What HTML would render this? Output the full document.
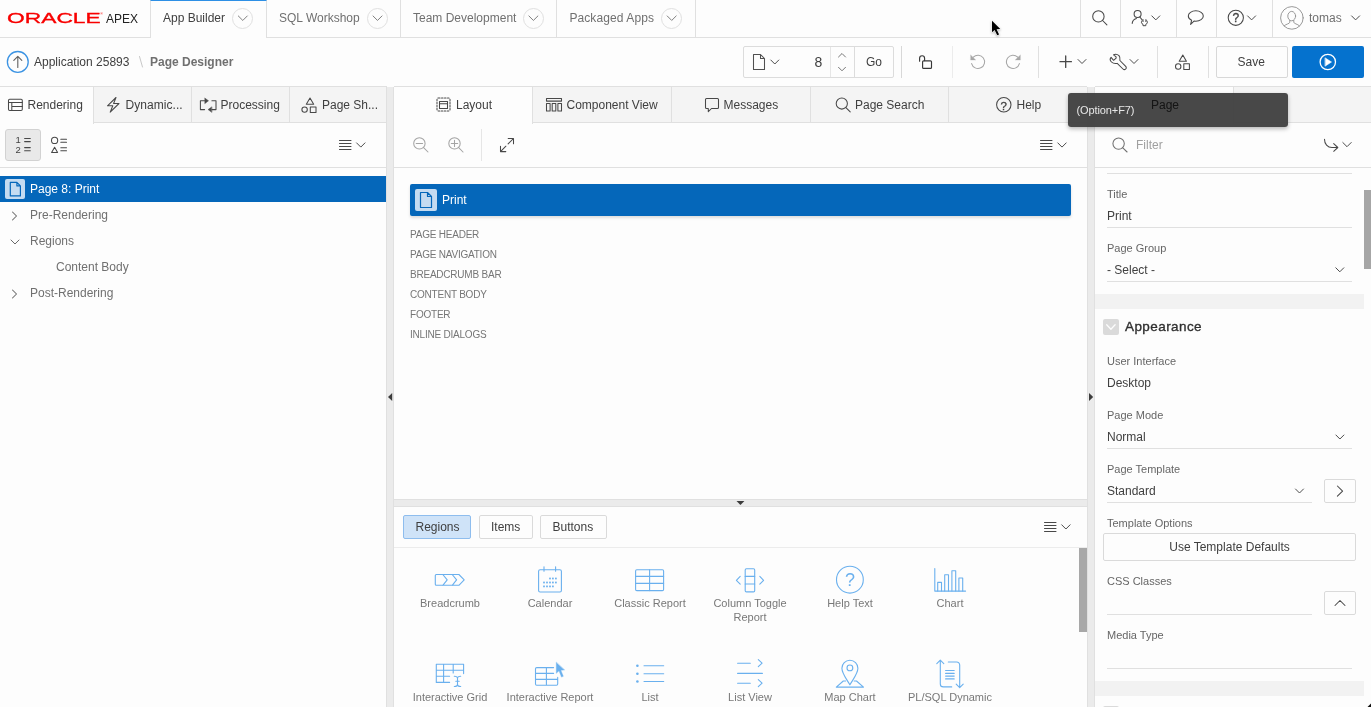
<!DOCTYPE html>
<html><head><meta charset="utf-8"><title>Page Designer</title>
<style>
*{box-sizing:border-box;margin:0;padding:0}
html,body{width:1371px;height:707px;overflow:hidden;background:#fdfdfd}
body{font-family:"Liberation Sans",sans-serif;font-size:12px;color:#404040;position:relative;letter-spacing:0}
.abs{position:absolute}
.t{position:absolute;white-space:nowrap;line-height:16px}
svg{position:absolute;overflow:visible}
.ic{fill:none;stroke:#484848;stroke-width:1.05;stroke-linecap:round;stroke-linejoin:round}
/* header */
#hdr{left:0;top:0;width:1371px;height:38px;background:#fdfdfd;border-bottom:1px solid #e0e0e0}
.htab{position:absolute;top:0;height:37px;border-right:1px solid #e0e0e0}
.htab .t{top:10px;color:#707070}
.circ{position:absolute;width:21px;height:21px;border:1px solid #e0e0e0;border-radius:50%;top:8px}
.vsep{position:absolute;width:1px;background:#e0e0e0}
/* toolbar */
#tb{left:0;top:38px;width:1371px;height:48px;background:#fdfdfd}
/* panels */
.ptabs{position:absolute;top:86px;height:37px;background:#f4f4f4;border-top:1px solid #e0e0e0;border-bottom:1px solid #e0e0e0}
.ptab{position:absolute;top:0;height:36px;border-right:1px solid #e0e0e0}
.ptab.act{background:#fdfdfd;height:36px}
.ptab .t{top:10px}
.split{position:absolute;background:#ebebeb;border-left:1px solid #e0e0e0;border-right:1px solid #e0e0e0}
.hline{position:absolute;height:1px;background:#e0e0e0}
.lbl{position:absolute;white-space:nowrap;font-size:11px;color:#666;line-height:14px;letter-spacing:0}
.val{position:absolute;white-space:nowrap;font-size:12px;color:#404040;line-height:16px}
.btn{position:absolute;border:1px solid #dadada;border-radius:2px;background:#fdfdfd}
.reg{position:absolute;white-space:nowrap;font-size:10px;color:#767676;line-height:12px;letter-spacing:-0.22px}
.gl{position:absolute;width:100px;text-align:center;font-size:11px;line-height:14px;color:#787878;letter-spacing:0}
.gi{stroke:#6ab0ee;fill:none;stroke-width:1.1;stroke-linecap:round;stroke-linejoin:round}
#wrap{position:absolute;left:0;top:0;width:1371px;height:707px;will-change:transform}
</style></head><body><div id="wrap">
<!-- HEADER -->
<div id="hdr" class="abs">
<svg style="left:0;top:0" width="150" height="37"><text x="7.100" y="23.200" font-family="Liberation Sans, sans-serif" font-size="15.500" fill="#f80000" stroke="#f80000" stroke-width="0.35" textLength="93.600" lengthAdjust="spacingAndGlyphs" letter-spacing="0">ORACLE</text><text x="100.300" y="15.200" font-family="Liberation Sans, sans-serif" font-size="3.500" fill="#f80000" letter-spacing="0">®</text><text x="106" y="22.7" font-family="Liberation Sans, sans-serif" font-size="12" fill="#222" textLength="32" lengthAdjust="spacingAndGlyphs" letter-spacing="0">APEX</text></svg>
<div class="htab" style="left:150px;width:117px;border-left:1px solid #e0e0e0;border-top:1px solid #2d8fe5;background:#fdfdfd;height:38px"><span class="t" style="left:12px;top:9px;color:#404040">App Builder</span><span class="circ" style="left:81px;top:6.5px"></span></div>
<svg style="left:0;top:0" width="1" height="1"><path d="M238.3 15.95 L242.8 20.45 L247.3 15.95" fill="none" stroke="#808080" stroke-width="1" stroke-linecap="round" stroke-linejoin="round"/></svg>
<div class="htab" style="left:267px;width:134px"><span class="t" style="left:12px">SQL Workshop</span><span class="circ" style="left:100px"></span></div>
<svg style="left:0;top:0" width="1" height="1"><path d="M373.0 15.95 L377.5 20.45 L382.0 15.95" fill="none" stroke="#808080" stroke-width="1" stroke-linecap="round" stroke-linejoin="round"/></svg>
<div class="htab" style="left:401px;width:156px"><span class="t" style="left:12px">Team Development</span><span class="circ" style="left:122px"></span></div>
<svg style="left:0;top:0" width="1" height="1"><path d="M528.9 15.95 L533.4 20.45 L537.9 15.95" fill="none" stroke="#808080" stroke-width="1" stroke-linecap="round" stroke-linejoin="round"/></svg>
<div class="htab" style="left:557px;width:139px"><span class="t" style="left:12.400px;letter-spacing:0.100px">Packaged Apps</span><span class="circ" style="left:104px"></span></div>
<svg style="left:0;top:0" width="1" height="1"><path d="M667.2 15.95 L671.7 20.45 L676.2 15.95" fill="none" stroke="#808080" stroke-width="1" stroke-linecap="round" stroke-linejoin="round"/></svg>
<div class="vsep" style="left:1080px;top:0;height:37px"></div>
<div class="vsep" style="left:1120px;top:0;height:37px"></div>
<div class="vsep" style="left:1176px;top:0;height:37px"></div>
<div class="vsep" style="left:1216px;top:0;height:37px"></div>
<div class="vsep" style="left:1272px;top:0;height:37px"></div>
<svg style="left:0;top:0" width="1" height="1"><g class="ic" ><circle cx="1098.4" cy="16.4" r="5.7"/><path d="M1102.6 20.5 L1106.9 24.9"/></g></svg>
<svg style="left:0;top:0" width="1" height="1"><g class="ic" ><ellipse cx="1137.6" cy="14" rx="3.5" ry="3.5"/><path d="M1132.2 23.4 c0.2 -2.6 1.6 -4.3 4.2 -5 M1139.8 17 l2.2 2.6"/><path d="M1143 19.6 v2 M1145.9 19.6 v2 M1142 20.6 c-1.2 1.4 -0.6 3.2 1 3.7 v1.4 h2.8 v-1.4 c1.600 -0.500 2.200 -2.300 1 -3.700" stroke-width="1"/></g></svg>
<svg style="left:0;top:0" width="1" height="1"><path d="M1151.8 15.899999999999999 L1155.8 19.9 L1159.8 15.899999999999999" fill="none" stroke="#4c4c4c" stroke-width="1.0" stroke-linecap="round" stroke-linejoin="round"/></svg>
<svg style="left:0;top:0" width="1" height="1"><g class="ic" ><path d="M1191.6 20.300 c-2 -1 -3.300 -2.500 -3.300 -4.300 c0 -2.900 3.300 -5.200 7.500 -5.200 c4.200 0 7.500 2.300 7.500 5.200 c0 2.900 -3.300 5.200 -7.500 5.200 c-0.600 0 -1.200 -0.050 -1.800 -0.150 l-3.400 3.300 z"/></g></svg>
<svg style="left:0;top:0" width="1" height="1"><g class="ic" ><circle cx="1235.8" cy="17.8" r="7.6"/></g></svg>
<span class="t" style="left:1232.4px;top:10px;font-size:12px;letter-spacing:0;color:#404040;-webkit-text-stroke:0.3px #404040">?</span>
<svg style="left:0;top:0" width="1" height="1"><path d="M1247.6 15.899999999999999 L1251.6 19.9 L1255.6 15.899999999999999" fill="none" stroke="#4c4c4c" stroke-width="1.0" stroke-linecap="round" stroke-linejoin="round"/></svg>
<svg style="left:0;top:0" width="1" height="1"><g class="ic" ><circle cx="1291.900" cy="17.900" r="11.300" stroke="#949494" stroke-width="0.950"/><ellipse cx="1291.700" cy="16.100" rx="3.900" ry="4.700" stroke="#949494" stroke-width="0.950"/><path d="M1289.800 20.400 v1.800 c0 1.600 -3.800 1.700 -5.600 3.600 M1293.800 20.400 v1.800 c0 1.600 3.800 1.700 5.600 3.600" stroke="#949494" stroke-width="0.950"/></g></svg>
<span class="t" style="left:1309px;top:10px;color:#707070">tomas</span>
<svg style="left:0;top:0" width="1" height="1"><path d="M1351.6 15.899999999999999 L1355.6 19.9 L1359.6 15.899999999999999" fill="none" stroke="#4c4c4c" stroke-width="1.0" stroke-linecap="round" stroke-linejoin="round"/></svg>
</div>
<!-- TOOLBAR -->
<div id="tb" class="abs"></div>
<svg style="left:0;top:0" width="1" height="1"><g class="ic" ><circle cx="17.8" cy="61.9" r="10.4" stroke="#3b93e3" stroke-width="1.3"/><path d="M17.8 67.5 V56.5 M13.8 60.3 L17.8 56.3 L21.8 60.3" stroke="#606060" stroke-width="1.1"/></g></svg>
<span class="t" style="left:34px;top:54px">Application 25893</span>
<svg style="left:0;top:0" width="1" height="1"><g class="ic" ><path d="M139.5 56.5 L142.5 67" stroke="#c8c8c8" stroke-width="1"/></g></svg>
<span class="t" style="left:150px;top:54px;font-weight:bold;color:#707070">Page Designer</span>
<div class="btn" style="left:743px;top:46px;width:151px;height:32px;border-color:#dcdcdc"></div>
<div class="vsep" style="left:830px;top:47px;height:30px;background:#e6e6e6"></div>
<div class="vsep" style="left:854px;top:47px;height:30px;background:#dcdcdc"></div>
<svg style="left:0;top:0" width="1" height="1"><g class="ic" ><path d="M753.5 54.5 h7 l4 4 v11 h-11 z M760.5 54.5 v4 h4" stroke="#505050"/></g></svg>
<svg style="left:0;top:0" width="1" height="1"><path d="M770.8 60.0 L774.8 64.0 L778.8 60.0" fill="none" stroke="#4c4c4c" stroke-width="1.0" stroke-linecap="round" stroke-linejoin="round"/></svg>
<span class="t" style="left:814.5px;top:53.5px;font-size:14px;letter-spacing:0">8</span>
<svg style="left:0;top:0" width="1" height="1"><g class="ic" ><path d="M838.500 57 L842 53.500 L845.500 57 M838.500 67.300 L842 70.800 L845.500 67.300" stroke="#707070" stroke-width="0.950"/></g></svg>
<span class="t" style="left:866px;top:54px">Go</span>
<div class="vsep" style="left:901px;top:46px;height:32px;background:#d8d8d8"></div>
<div class="vsep" style="left:952px;top:46px;height:32px;background:#ececec"></div>
<div class="vsep" style="left:1038px;top:46px;height:32px;background:#e0e0e0"></div>
<div class="vsep" style="left:1157px;top:46px;height:32px;background:#e0e0e0"></div>
<div class="vsep" style="left:1208px;top:46px;height:32px;background:#e0e0e0"></div>
<svg style="left:0;top:0" width="1" height="1"><g class="ic" ><rect x="922.600" y="60.800" width="8.900" height="7.600" rx="1" stroke="#383838" stroke-width="1.150"/><path d="M919.600 61.200 v-3 a2.500 2.500 0 0 1 5 0 v2.400" stroke="#383838" stroke-width="1.150"/></g></svg>
<svg style="left:0;top:0" width="1" height="1"><g class="ic" ><path d="M973.300 57.200 A6.600 6.600 0 1 1 971.600 63.600" stroke="#a6a6a6"/><path d="M970.800 55.200 L975.600 59.900 L970.800 59.900 Z" fill="#a6a6a6" stroke="#a6a6a6" stroke-width="0.400"/></g></svg>
<svg style="left:0;top:0" width="1" height="1"><g class="ic" ><path d="M1017.700 57.200 A6.600 6.600 0 1 0 1019.400 63.600" stroke="#a6a6a6"/><path d="M1020.200 55.200 L1015.400 59.900 L1020.200 59.900 Z" fill="#a6a6a6" stroke="#a6a6a6" stroke-width="0.400"/></g></svg>
<svg style="left:0;top:0" width="1" height="1"><g class="ic" ><path d="M1060 61.7 h11.4 M1065.7 56 v11.4" stroke-width="1.3"/></g></svg>
<svg style="left:0;top:0" width="1" height="1"><path d="M1078.0 59.5 L1082 63.5 L1086.0 59.5" fill="none" stroke="#4c4c4c" stroke-width="1.0" stroke-linecap="round" stroke-linejoin="round"/></svg>
<svg style="left:0;top:0" width="1" height="1"><g class="ic" ><path d="M1113.6 54.800 C1115 54 1117.500 54.300 1119 55.700 C1120.200 57 1120.100 59 1119.900 60.500 L1125.700 66.300 A1.900 1.900 0 0 1 1123 69 L1117.200 63.400 C1115.500 63.700 1113 63.500 1111.500 62 C1110 60.500 1109.900 58.600 1111.100 57.300 L1113.600 60.300 L1116.100 58.200 L1116.100 56.900 Z"/></g></svg>
<svg style="left:0;top:0" width="1" height="1"><path d="M1130.0 59.5 L1134 63.5 L1138.0 59.5" fill="none" stroke="#4c4c4c" stroke-width="1.0" stroke-linecap="round" stroke-linejoin="round"/></svg>
<svg style="left:0;top:0" width="1" height="1"><g class="ic" ><path d="M1182.8 55 l3.6 6.3 h-7.2 z"/><circle cx="1178.2" cy="66.5" r="2.7"/><rect x="1183.8" y="63.8" width="5.6" height="5.6"/></g></svg>
<div class="btn" style="left:1216px;top:46px;width:72px;height:32px;border-color:#d8d8d8"></div>
<span class="t" style="left:1237.5px;top:54px">Save</span>
<div class="abs" style="left:1292px;top:46px;width:72px;height:32px;background:#0572ce;border-radius:2px"></div>
<svg style="left:0;top:0" width="1" height="1"><g class="ic" ><circle cx="1327.800" cy="62" r="7.700" stroke="#fff" stroke-width="1.300"/><path d="M1325.300 58 l6.200 4 l-6.200 4 z" fill="#fff" stroke="#fff" stroke-width="0.6"/></g></svg>
<!-- LEFT -->
<div class="ptabs" style="left:0;width:387px">
<div class="ptab act" style="left:0;width:94px;height:37px"><span class="t" style="left:27.5px">Rendering</span></div>
<div class="ptab" style="left:94px;width:98px"><span class="t" style="left:31.500px;letter-spacing:0.050px">Dynamic...</span></div>
<div class="ptab" style="left:192px;width:98px"><span class="t" style="left:28.5px">Processing</span></div>
<div class="ptab" style="left:290px;width:97px;border-right:none"><span class="t" style="left:32px">Page Sh...</span></div>
</div>
<svg style="left:0;top:0" width="1" height="1"><g class="ic" ><rect x="8.500" y="99.300" width="13.800" height="11.200" rx="1.200"/><path d="M8.500 102.500 h13.800 M11.800 102.500 v8 M11.800 106.400 h10.500"/></g></svg>
<svg style="left:0;top:0" width="1" height="1"><g class="ic" ><path d="M116 97.5 l-8.5 8.3 h5.3 l-2.6 6.3 l8.8 -8.6 h-5.4 z"/></g></svg>
<svg style="left:0;top:0" width="1" height="1"><g class="ic" ><path d="M204.600 100.800 H200.400 V109.600 H204.600 M211.900 100.800 H216 V109.600 H211.800"/><path d="M205 98.200 L208.500 100.800 L205 103.400 Z M211.600 107 L208.100 109.600 L211.600 112.200 Z" fill="#484848" stroke-width="0.500"/></g></svg>
<svg style="left:0;top:0" width="1" height="1"><g class="ic" ><path d="M310 98 l3.700 6.200 h-7.400 z"/><circle cx="304.600" cy="109.600" r="2.700"/><rect x="310.300" y="106.900" width="5.700" height="5.500"/></g></svg>
<div class="hline" style="left:0;top:167px;width:387px"></div>
<div class="btn" style="left:5px;top:129px;width:36px;height:32px;background:#e9e9e9;border-color:#d2d2d2;border-radius:3px"></div>
<span class="t" style="left:15.500px;top:135px;font-size:9.500px;line-height:10px;letter-spacing:0;color:#404040">1</span>
<span class="t" style="left:15.500px;top:144.500px;font-size:9.500px;line-height:10px;letter-spacing:0;color:#404040">2</span>
<svg style="left:0;top:0" width="1" height="1"><g class="ic" ><path d="M24.600 138.400 h5.700 M24.600 141.600 h5.700 M24.600 147.600 h5.700 M24.600 150.800 h5.700"/></g></svg>
<svg style="left:0;top:0" width="1" height="1"><g class="ic" ><circle cx="54.600" cy="140.400" r="3.100"/><path d="M54.600 147.200 l3 5.200 h-6 z"/><path d="M60.800 139.200 h5.700 M60.800 142.200 h5.700 M60.800 147.800 h5.700 M60.800 150.800 h5.700"/></g></svg>
<svg style="left:0;top:0" width="1" height="1"><g class="ic" ><path d="M339.5 140.500 h11.500 M339.5 143.500 h11.500 M339.5 146.500 h11.500 M339.5 149.500 h11.500"/></g></svg>
<svg style="left:0;top:0" width="1" height="1"><path d="M356.6 142.9 L360.8 147.1 L365.0 142.9" fill="none" stroke="#4c4c4c" stroke-width="1.0" stroke-linecap="round" stroke-linejoin="round"/></svg>
<div class="abs" style="left:0;top:176px;width:386px;height:26px;background:#0567ba"></div>
<div class="abs" style="left:5px;top:179px;width:20px;height:20px;background:#c4dbf1;border-radius:2px"></div>
<svg style="left:0;top:0" width="1" height="1"><g class="ic" ><path d="M10.300 182.400 h6.600 l3.500 3.500 v10 h-10.100 z M16.900 182.400 v3.500 h3.500" stroke="#0567ba" stroke-width="1.200"/></g></svg>
<span class="t" style="left:30px;top:181px;color:#fff">Page 8: Print</span>
<svg style="left:0;top:0" width="1" height="1"><g class="ic" ><path d="M12.500 212 l4 4 l-4 4" stroke="#6a6a6a"/></g></svg>
<span class="t" style="left:30px;top:207px;color:#707070">Pre-Rendering</span>
<svg style="left:0;top:0" width="1" height="1"><path d="M11.0 240.0 L15 244.0 L19.0 240.0" fill="none" stroke="#6a6a6a" stroke-width="1.0" stroke-linecap="round" stroke-linejoin="round"/></svg>
<span class="t" style="left:30px;top:233px;color:#707070">Regions</span>
<span class="t" style="left:56px;top:259px;color:#707070">Content Body</span>
<svg style="left:0;top:0" width="1" height="1"><g class="ic" ><path d="M12.500 290 l4 4 l-4 4" stroke="#6a6a6a"/></g></svg>
<span class="t" style="left:30px;top:285px;color:#707070">Post-Rendering</span>
<div class="split" style="left:386px;top:87px;width:8px;height:620px"></div>
<svg style="left:0;top:0" width="1" height="1"><path d="M392.200 393 v8 l-4.200 -4 z" fill="#3c3c3c"/></svg>
<!-- CENTER -->
<div class="ptabs" style="left:394px;width:693px">
<div class="ptab act" style="left:0px;width:139px;height:37px"><span class="t" style="left:62px">Layout</span></div>
<div class="ptab" style="left:139px;width:139px"><span class="t" style="left:33.5px">Component View</span></div>
<div class="ptab" style="left:278px;width:139px"><span class="t" style="left:51.5px">Messages</span></div>
<div class="ptab" style="left:417px;width:138px"><span class="t" style="left:44px">Page Search</span></div>
<div class="ptab" style="left:555px;width:138px;border-right:none"><span class="t" style="left:67.5px">Help</span></div>
</div>
<svg style="left:0;top:0" width="1" height="1"><g class="ic" ><rect x="437" y="98" width="13" height="13" rx="1.5" stroke-dasharray="1.6 1.4"/><rect x="439.500" y="101.500" width="8" height="7"/><path d="M439.500 103.800 h8"/></g></svg>
<svg style="left:0;top:0" width="1" height="1"><g class="ic" ><rect x="546.5" y="98.5" width="15" height="2.6"/><rect x="546.5" y="103.5" width="3.6" height="7.5"/><rect x="552.2" y="103.5" width="3.6" height="7.5"/><rect x="557.9" y="103.5" width="3.6" height="7.5"/></g></svg>
<svg style="left:0;top:0" width="1" height="1"><g class="ic" ><path d="M706.500 98.500 h11 a1 1 0 0 1 1 1 v8 a1 1 0 0 1 -1 1 h-6 l-3.200 3.200 v-3.200 h-1.800 a1 1 0 0 1 -1 -1 v-8 a1 1 0 0 1 1 -1 z"/></g></svg>
<svg style="left:0;top:0" width="1" height="1"><g class="ic" ><circle cx="841.800" cy="103.500" r="5.600"/><path d="M845.900 107.600 L850.200 111.900"/></g></svg>
<svg style="left:0;top:0" width="1" height="1"><g class="ic" ><circle cx="1003.8" cy="104.7" r="7.2"/></g></svg>
<span class="t" style="left:1000.600px;top:97.500px;font-size:11.500px;letter-spacing:0;color:#404040;-webkit-text-stroke:0.300px #404040">?</span>
<div class="hline" style="left:394px;top:167px;width:693px"></div>
<svg style="left:0;top:0" width="1" height="1"><g class="ic" ><circle cx="419.400" cy="143.400" r="5.700" stroke="#a4a4a4"/><path d="M423.600 147.600 L428 152 M416.200 143.400 h6.400" stroke="#a4a4a4"/></g></svg>
<svg style="left:0;top:0" width="1" height="1"><g class="ic" ><circle cx="454.500" cy="143.400" r="5.700" stroke="#a4a4a4"/><path d="M458.700 147.600 L463 152 M451.300 143.400 h6.400 M454.500 140.200 v6.400" stroke="#a4a4a4"/></g></svg>
<div class="vsep" style="left:481px;top:129px;height:32px;background:#e6e6e6"></div>
<svg style="left:0;top:0" width="1" height="1"><g class="ic" ><path d="M508.200 138.500 h5.300 v5.300 M513.500 138.500 l-5.400 5.400 M505.800 151.600 h-5.300 v-5.300 M500.500 151.600 l5.400 -5.400"/></g></svg>
<svg style="left:0;top:0" width="1" height="1"><g class="ic" ><path d="M1040.5 140.500 h11.500 M1040.5 143.500 h11.500 M1040.5 146.500 h11.500 M1040.5 149.500 h11.500"/></g></svg>
<svg style="left:0;top:0" width="1" height="1"><path d="M1057.8 142.9 L1062 147.1 L1066.2 142.9" fill="none" stroke="#4c4c4c" stroke-width="1.0" stroke-linecap="round" stroke-linejoin="round"/></svg>
<div class="abs" style="left:410px;top:184px;width:661px;height:32px;background:#0567ba;border-radius:2px;box-shadow:0 2px 3px rgba(0,0,0,0.13)"></div>
<div class="abs" style="left:415px;top:189px;width:22px;height:22px;background:#c4dbf1;border-radius:2px"></div>
<svg style="left:0;top:0" width="1" height="1"><g class="ic" ><path d="M420.5 192.5 h7 l4 4 v11 h-11 z M427.5 192.5 v4 h4" stroke="#0567ba" stroke-width="1.2"/></g></svg>
<span class="t" style="left:442px;top:192px;color:#fff">Print</span>
<span class="reg" style="left:410px;top:229px">PAGE HEADER</span>
<span class="reg" style="left:410px;top:249px">PAGE NAVIGATION</span>
<span class="reg" style="left:410px;top:269px">BREADCRUMB BAR</span>
<span class="reg" style="left:410px;top:289px">CONTENT BODY</span>
<span class="reg" style="left:410px;top:309px">FOOTER</span>
<span class="reg" style="left:410px;top:329px">INLINE DIALOGS</span>
<div class="abs" style="left:394px;top:499px;width:693px;height:8px;background:#ebebeb;border-top:1px solid #e0e0e0;border-bottom:1px solid #e0e0e0"></div>
<svg style="left:0;top:0" width="1" height="1"><path d="M736.500 500.900 h7.900 l-3.950 4.200 z" fill="#3c3c3c"/></svg>
<div class="btn" style="left:403px;top:515px;width:68px;height:24px;background:#cfe3f8;border-color:#8ebdee"></div>
<span class="t" style="left:415.500px;top:519px">Regions</span>
<div class="btn" style="left:479px;top:515px;width:54px;height:24px"></div>
<span class="t" style="left:491px;top:519px">Items</span>
<div class="btn" style="left:540px;top:515px;width:67px;height:24px"></div>
<span class="t" style="left:552.500px;top:519px">Buttons</span>
<svg style="left:0;top:0" width="1" height="1"><g class="ic" ><path d="M1044.500 522.500 h11.500 M1044.500 525.500 h11.500 M1044.500 528.500 h11.500 M1044.500 531.500 h11.500"/></g></svg>
<svg style="left:0;top:0" width="1" height="1"><path d="M1061.7 524.8 L1065.9 529.0 L1070.1000000000001 524.8" fill="none" stroke="#4c4c4c" stroke-width="1.0" stroke-linecap="round" stroke-linejoin="round"/></svg>
<div class="hline" style="left:394px;top:547px;width:693px;background:#ececec"></div>
<div class="abs" style="left:1079px;top:548px;width:8px;height:84px;background:#a8a8a8"></div>
<div class="gl" style="left:400px;top:596px">Breadcrumb</div>
<div class="gl" style="left:500px;top:596px">Calendar</div>
<div class="gl" style="left:600px;top:596px">Classic Report</div>
<div class="gl" style="left:700px;top:596px">Column Toggle<br>Report</div>
<div class="gl" style="left:800px;top:596px">Help Text</div>
<div class="gl" style="left:900px;top:596px">Chart</div>
<div class="gl" style="left:400px;top:690px">Interactive Grid</div>
<div class="gl" style="left:500px;top:690px">Interactive Report</div>
<div class="gl" style="left:600px;top:690px">List</div>
<div class="gl" style="left:700px;top:690px">List View</div>
<div class="gl" style="left:800px;top:690px">Map Chart</div>
<div class="gl" style="left:900px;top:690px">PL/SQL Dynamic</div>
<svg style="left:0;top:0" width="1" height="1"><g class="gi" ><path d="M436.300 574.500 h22.600 l5.300 5.400 l-5.300 5.400 h-22.600 a1 1 0 0 1 -1 -1 v-8.800 a1 1 0 0 1 1 -1 z M442.800 574.500 l4.400 5.400 l-4.400 5.400 M452.200 574.500 l4.400 5.400 l-4.400 5.400"/><rect x="538.600" y="569.800" width="22.800" height="22.200" rx="1.500"/><path d="M544 566.700 v4.600 M555.600 566.700 v4.600"/><rect x="549.15" y="577.65" width="1.700" height="1.700" fill="#6ab0ee" stroke="none"/><rect x="552.05" y="577.65" width="1.700" height="1.700" fill="#6ab0ee" stroke="none"/><rect x="555.05" y="577.65" width="1.700" height="1.700" fill="#6ab0ee" stroke="none"/><rect x="543.15" y="581.65" width="1.700" height="1.700" fill="#6ab0ee" stroke="none"/><rect x="546.15" y="581.65" width="1.700" height="1.700" fill="#6ab0ee" stroke="none"/><rect x="549.15" y="581.65" width="1.700" height="1.700" fill="#6ab0ee" stroke="none"/><rect x="552.05" y="581.65" width="1.700" height="1.700" fill="#6ab0ee" stroke="none"/><rect x="555.05" y="581.65" width="1.700" height="1.700" fill="#6ab0ee" stroke="none"/><rect x="543.15" y="585.55" width="1.700" height="1.700" fill="#6ab0ee" stroke="none"/><rect x="546.15" y="585.55" width="1.700" height="1.700" fill="#6ab0ee" stroke="none"/><rect x="549.15" y="585.55" width="1.700" height="1.700" fill="#6ab0ee" stroke="none"/><rect x="552.05" y="585.55" width="1.700" height="1.700" fill="#6ab0ee" stroke="none"/><rect x="635.600" y="569.800" width="28" height="20.800" rx="1.200"/><path d="M635.600 576.400 h28 M635.600 583.400 h28 M649.600 569.800 v20.800"/><rect x="745.200" y="568.700" width="9.500" height="23.200" rx="1.200"/><path d="M745.200 576.400 h9.500 M745.200 584 h9.500 M740.200 576.400 l-3.800 3.900 l3.800 3.800 M759.800 576.400 l3.800 3.900 l-3.800 3.800"/><circle cx="849.900" cy="579.700" r="13.400"/><path d="M934.800 568.500 v22.600 h30.800"/><path d="M937.700 591 v-8.600 h3.800 v8.600 M944.700 591 v-16.300 h3.800 v16.300 M951.900 591 v-20.200 h3.800 v20.200 M958.900 591 v-13 h3.800 v13"/><path d="M463.600 673.600 v-9.300 h-27.300 v18.100 h13.300 M436.300 670.300 h27.300 M436.300 676.300 h13.300 M443.600 664.300 v18.100 M453.200 664.300 v8.700"/><path d="M454.300 676.300 c1.900 0 3.200 0.600 3.200 2 c0 -1.400 1.300 -2 3.200 -2 M454.300 686.500 c1.900 0 3.200 -0.600 3.200 -2 c0 1.400 1.300 2 3.200 2 M457.500 678.300 v6.200 M455.800 681.300 h3.400"/><path d="M553.600 667.600 h-16.900 a1.200 1.200 0 0 0 -1.200 1.200 v15.300 a1.200 1.200 0 0 0 1.200 1.200 h19.800 a1.200 1.200 0 0 0 1.200 -1.200 v-6.700 M535.500 673.400 h18.100 M535.500 679.400 h22.200 M546.400 667.600 v17.700"/><path d="M556.300 662.500 v10.800 l2.700 -2.500 l2.500 6.300 l1.800 -0.800 l-2.500 -6.100 l3.500 -0.300 z" fill="#6ab0ee" stroke-width="0.400"/><path d="M644 665.700 h19.700 M644 673.700 h19.700 M644 681.500 h19.700"/><circle cx="637.400" cy="665.700" r="1.300" fill="#6ab0ee" stroke="none"/><circle cx="637.400" cy="673.700" r="1.300" fill="#6ab0ee" stroke="none"/><circle cx="637.400" cy="681.500" r="1.300" fill="#6ab0ee" stroke="none"/><path d="M737.600 663.200 h12.700 M737.600 673.400 h24.800 M737.600 683.200 h12.700 M758.300 659.700 l3.800 3.500 l-3.800 3.500 M758.300 679.700 l3.800 3.500 l-3.800 3.500"/><path d="M849.900 684.800 c-3.800 -6.500 -8 -11.500 -8 -16.600 a8 8 0 0 1 16 0 c0 5.100 -4.200 10.100 -8 16.600 z"/><circle cx="849.900" cy="667.900" r="2.900"/><path d="M845.600 681 h-2.300 l-7 6.100 h27.200 l-7 -6.100 h-2.300"/><path d="M940.300 660.400 v23.500 a3 3 0 0 0 3 3 h8.400 M936.800 663.700 l3.500 -3.500 l3.500 3.500 M959.700 687.500 v-22.500 a3 3 0 0 0 -3 -3 h-8.400 M956.200 684.200 l3.500 3.500 l3.500 -3.500 M945.600 670.500 h8.600 M945.600 673.400 h8.600 M945.600 676.100 h8.600 M945.600 678.900 h8.600"/></g></svg>
<span class="t" style="left:844.900px;top:569.500px;font-size:18px;line-height:20px;letter-spacing:0;color:#6ab0ee">?</span>
<!-- RIGHT -->
<div class="split" style="left:1087px;top:87px;width:8px;height:620px"></div>
<svg style="left:0;top:0" width="1" height="1"><path d="M1089 393 v8 l4.200 -4 z" fill="#3c3c3c"/></svg>
<div class="ptabs" style="left:1095px;width:276px">
<div class="ptab act" style="left:0;width:139px;height:37px"><span class="t" style="left:56px">Page</span></div>
</div>
<div class="hline" style="left:1095px;top:167px;width:276px"></div>
<svg style="left:0;top:0" width="1" height="1"><g class="ic" ><circle cx="1118.600" cy="143.600" r="5.700" stroke="#707070"/><path d="M1122.800 147.800 L1127.100 152" stroke="#707070"/></g></svg>
<span class="t" style="left:1136px;top:137px;color:#a0a0a0">Filter</span>
<svg style="left:0;top:0" width="1" height="1"><g class="ic" ><path d="M1324.500 139.200 C1324.500 144 1327.500 147.500 1332 147.500 L1337.700 147.500 M1333.700 143.600 L1337.800 147.500 L1333.700 151.300"/></g></svg>
<svg style="left:0;top:0" width="1" height="1"><path d="M1342.8 142.5 L1347 146.7 L1351.2 142.5" fill="none" stroke="#4c4c4c" stroke-width="1.0" stroke-linecap="round" stroke-linejoin="round"/></svg>
<div class="hline" style="left:1107px;top:173px;width:245px;background:#e0e0e0"></div>
<span class="lbl" style="left:1107px;top:187px">Title</span>
<span class="val" style="left:1107px;top:208px">Print</span>
<div class="hline" style="left:1107px;top:227px;width:245px;background:#e0e0e0"></div>
<span class="lbl" style="left:1107px;top:241px">Page Group</span>
<span class="val" style="left:1107px;top:262px">- Select -</span>
<svg style="left:0;top:0" width="1" height="1"><path d="M1335.8 267.8 L1339.8 271.8 L1343.8 267.8" fill="none" stroke="#4c4c4c" stroke-width="1.0" stroke-linecap="round" stroke-linejoin="round"/></svg>
<div class="hline" style="left:1107px;top:281px;width:245px;background:#e0e0e0"></div>
<div class="abs" style="left:1364px;top:190px;width:7px;height:79px;background:#a6a6a6"></div>
<div class="abs" style="left:1095px;top:294px;width:269px;height:15px;background:#f2f2f2"></div>
<div class="abs" style="left:1103px;top:319px;width:16px;height:16px;background:#dadada;border-radius:2px"></div>
<svg style="left:0;top:0" width="1" height="1"><path d="M1106.7 324.8 L1110.9 329.2 L1115.1000000000001 324.8" fill="none" stroke="#fdfdfd" stroke-width="1.3" stroke-linecap="round" stroke-linejoin="round"/></svg>
<span class="t" style="left:1125px;top:318px;font-size:13.500px;line-height:18px;color:#303030;letter-spacing:0.420px;-webkit-text-stroke:0.350px #303030">Appearance</span>
<span class="lbl" style="left:1107px;top:354px">User Interface</span>
<span class="val" style="left:1107px;top:375px">Desktop</span>
<span class="lbl" style="left:1107px;top:408px">Page Mode</span>
<span class="val" style="left:1107px;top:429px">Normal</span>
<svg style="left:0;top:0" width="1" height="1"><path d="M1335.9 435.0 L1339.9 439.0 L1343.9 435.0" fill="none" stroke="#4c4c4c" stroke-width="1.0" stroke-linecap="round" stroke-linejoin="round"/></svg>
<div class="hline" style="left:1107px;top:448px;width:245px;background:#e0e0e0"></div>
<span class="lbl" style="left:1107px;top:462px">Page Template</span>
<span class="val" style="left:1107px;top:483px">Standard</span>
<svg style="left:0;top:0" width="1" height="1"><path d="M1295.5 489.0 L1299.5 493.0 L1303.5 489.0" fill="none" stroke="#4c4c4c" stroke-width="1.0" stroke-linecap="round" stroke-linejoin="round"/></svg>
<div class="hline" style="left:1107px;top:502px;width:205px;background:#e0e0e0"></div>
<div class="btn" style="left:1324px;top:479px;width:32px;height:24px"></div>
<svg style="left:0;top:0" width="1" height="1"><g class="ic" ><path d="M1337.400 486 l5.200 5.100 l-5.200 5.100"/></g></svg>
<span class="lbl" style="left:1107px;top:516px">Template Options</span>
<div class="btn" style="left:1103px;top:533px;width:253px;height:28px"></div>
<span class="t" style="left:1103px;width:253px;text-align:center;top:539px">Use Template Defaults</span>
<span class="lbl" style="left:1107px;top:574px">CSS Classes</span>
<div class="hline" style="left:1107px;top:614px;width:205px;background:#e0e0e0"></div>
<div class="btn" style="left:1324px;top:591px;width:32px;height:24px"></div>
<svg style="left:0;top:0" width="1" height="1"><g class="ic" ><path d="M1335 605.500 l5 -5 l5 5"/></g></svg>
<span class="lbl" style="left:1107px;top:628px">Media Type</span>
<div class="hline" style="left:1107px;top:668px;width:245px;background:#e0e0e0"></div>
<div class="abs" style="left:1095px;top:681px;width:269px;height:15px;background:#f2f2f2"></div>
<div class="abs" style="left:1103px;top:706px;width:16px;height:16px;background:#dadada;border-radius:2px"></div>
<div class="abs" style="left:1068px;top:93px;width:220px;height:34px;background:rgba(62,62,62,0.95);border-radius:3px;box-shadow:0 2px 4px rgba(0,0,0,0.28)"></div>
<span class="t" style="left:1151px;top:96.500px;color:#151515">Page</span>
<span class="t" style="left:1076.500px;top:103px;font-size:11px;line-height:14px;color:#e8e8e8;letter-spacing:-0.1px">(Option+F7)</span>
<svg style="left:0;top:0;filter:drop-shadow(0 1px 1px rgba(0,0,0,0.3))" width="1" height="1"><path d="M992 20.700 L992 32.300 L994.600 30 L997.200 35.300 L999.100 34.400 L996.600 29.300 L1000.300 29 Z" fill="#000" stroke="#fff" stroke-width="1" stroke-linejoin="round" paint-order="stroke"/></svg>
<svg style="left:0;top:0" width="1" height="1"><path d="M1371 703.500 L1371 707 L1367.500 707 z" fill="#111"/></svg>
</div></body></html>
